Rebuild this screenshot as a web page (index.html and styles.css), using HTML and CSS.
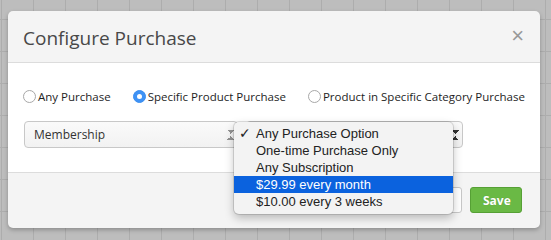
FILE: index.html
```html
<!DOCTYPE html>
<html lang="en">
<head>
    <meta charset="UTF-8">
    <meta name="viewport" content="width=device-width, initial-scale=1.0">
    <title>Configure Purchase</title>
    <link rel="stylesheet" href="styles.css">
</head>
<body>
    <div class="modal">
        <div class="modal-header">
            <h2 class="modal-title">Configure Purchase</h2>
            <span class="close">&times;</span>
        </div>

        <div class="modal-body">
            <div class="radio-row">
                <label class="radio"><span class="dot"></span>Any Purchase</label>
                <label class="radio checked"><span class="dot"></span>Specific Product Purchase</label>
                <label class="radio"><span class="dot"></span>Product in Specific Category Purchase</label>
            </div>

            <div class="select-row">
                <div class="select product">Membership<span class="arrows"></span></div>
                <!-- value is covered by the open menu -->
                <div class="select option"><span class="arrows"></span></div>
            </div>
        </div>

        <div class="modal-footer">
            <button class="btn cancel">Cancel</button>
            <button class="btn save">Save</button>
        </div>

        <!-- open native select menu -->
        <ul class="menu">
            <li class="selected">Any Purchase Option</li>
            <li>One-time Purchase Only</li>
            <li>Any Subscription</li>
            <li class="hover">$29.99 every month</li>
            <li>$10.00 every 3 weeks</li>
        </ul>
    </div>
</body>
</html>
```

FILE: styles.css
```css
* {
    margin: 0;
    padding: 0;
    box-sizing: border-box;
}

body {
    height: 240px;
    overflow: hidden;
    padding: 11px 0 0 8px;
    background-color: #bdbdbd;
    background-image:
        linear-gradient(to right, #adadad 1px, transparent 1px),
        linear-gradient(to bottom, #adadad 1px, transparent 1px);
    background-size: 32px 32px;
    background-position: 1px 19px;
    font-family: "Open Sans", sans-serif;
}

.modal {
    position: relative;
    width: 532px;
    height: 217px;
    background-color: #f4f4f4;
    border-radius: 5px;
    box-shadow: 0 2px 4px rgba(0, 0, 0, 0.25);
    display: flex;
    flex-direction: column;
}

.modal-header {
    height: 52px;
    padding: 0 16px 0 15px;
    border-bottom: 1px solid #dcdcdc;
    display: flex;
    align-items: center;
    justify-content: space-between;
}

.modal-title {
    font-size: 19px;
    font-weight: normal;
    color: #484848;
    padding-top: 2px;
}

.close {
    font-family: "Liberation Sans", sans-serif;
    font-size: 22px;
    color: #999;
    padding-bottom: 2px;
}

.modal-body {
    height: 109px;
    background-color: #fff;
    padding: 26px 15px 0 15px;
}

.radio-row {
    display: flex;
    gap: 22px;
    height: 14px;
    align-items: center;
}

.radio {
    display: flex;
    align-items: center;
    gap: 2px;
    font-size: 11.5px;
    color: #1e1e1e;
}

.dot {
    width: 13px;
    height: 13px;
    border-radius: 50%;
    border: 1px solid #a8a8a8;
    background-color: #fff;
    display: flex;
    align-items: center;
    justify-content: center;
}

.radio.checked .dot {
    border-color: #3b8ef0;
    background-color: #3e92f5;
}

.radio.checked .dot::after {
    content: "";
    width: 5px;
    height: 5px;
    border-radius: 50%;
    background-color: #fff;
}

.select-row {
    display: flex;
    gap: 8px;
    margin-top: 18px;
    padding-left: 1px;
}

.select {
    position: relative;
    height: 27px;
    border: 1px solid #c8c8c8;
    border-radius: 4px;
    background: linear-gradient(#fafafa, #f2f2f2);
    font-size: 12px;
    color: #333;
    padding: 0 9px;
    display: flex;
    align-items: center;
}

.select.product {
    width: 214px;
}

.select.option {
    width: 217px;
}

.arrows {
    position: absolute;
    right: 3px;
    top: 8px;
    width: 7px;
    height: 10px;
    background:
        linear-gradient(to top right, transparent 50%, #333 50%) no-repeat 0 0 / 4px 4px,
        linear-gradient(to top left, transparent 50%, #333 50%) no-repeat 3px 0 / 4px 4px,
        linear-gradient(to bottom right, transparent 50%, #333 50%) no-repeat 0 6px / 4px 4px,
        linear-gradient(to bottom left, transparent 50%, #333 50%) no-repeat 3px 6px / 4px 4px;
}

.select.product .arrows {
    opacity: 0.5;
}

.modal-footer {
    flex: 1;
    display: flex;
    justify-content: flex-end;
    align-items: flex-start;
    gap: 8px;
    padding: 14px 18px 0 0;
    border-top: 1px solid #dcdcdc;
}

.btn {
    height: 26px;
    border-radius: 3px;
    font-family: "Open Sans", sans-serif;
    font-size: 12px;
    padding: 0 12px;
}

.btn.cancel {
    width: 70px;
    background-color: #fff;
    border: 1px solid #c8c8c8;
    color: #333;
}

.btn.save {
    width: 52px;
    background-color: #6ab945;
    border: 1px solid #56a035;
    color: #fff;
    font-weight: bold;
    text-shadow: 0 0 1px rgba(0, 0, 0, 0.2);
}

.menu {
    position: absolute;
    left: 226px;
    top: 111px;
    width: 219px;
    padding: 3px 0 4px;
    list-style: none;
    background-color: #f3f3f3;
    border-radius: 5px;
    box-shadow: 0 0 0 1px rgba(0, 0, 0, 0.12), 0 4px 10px rgba(0, 0, 0, 0.25);
    font-family: "Liberation Sans", sans-serif;
    font-size: 13px;
    color: #222;
}

.menu li {
    position: relative;
    height: 17px;
    line-height: 17px;
    padding-left: 22px;
}

.menu li.selected::before {
    content: "\2713";
    position: absolute;
    left: 5px;
    font-family: "DejaVu Sans", sans-serif;
    font-size: 14px;
    font-weight: bold;
}

.menu li.hover {
    background-color: #0b62de;
    color: #fff;
}
```
